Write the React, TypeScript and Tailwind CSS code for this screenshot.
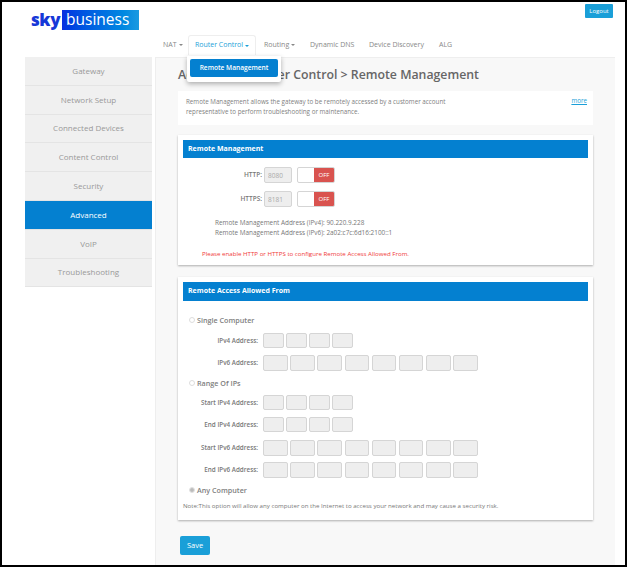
import React from "react";

const sideItems = ["Gateway", "Network Setup", "Connected Devices", "Content Control", "Security", "Advanced", "VoIP", "Troubleshooting"];

function Caret() {
  return <span className="ml-[2px] inline-block h-0 w-0 border-x-[2px] border-t-[2px] border-x-transparent border-t-current align-middle" />;
}

function Toggle() {
  return (
    <div className="ml-[5px] flex h-[16px] w-[38px] overflow-hidden rounded-[2px] border border-[#d5d5d5] bg-white">
      <div className="w-[16px]" />
      <div className="flex flex-1 items-center justify-center bg-[#d9534f] text-[6px] text-white">OFF</div>
    </div>
  );
}

function PortRow({ label, value }: { label: string; value: string }) {
  return (
    <div className="flex h-[16px] items-center">
      <div className="w-[79px] text-right text-[6.5px] font-semibold text-[#777]">{label}</div>
      <input
        readOnly
        value={value}
        className="ml-[2px] h-[16px] w-[28px] rounded-[2px] border border-[#d5d5d5] bg-[#eee] px-[3px] text-[6.5px] text-[#aaa] outline-none"
      />
      <Toggle />
    </div>
  );
}

function IpRow({ label, count, mt }: { label: string; count: number; mt: string }) {
  const boxes = Array.from({ length: count }, (_, i) => i);
  return (
    <div className={`flex items-center ${mt}`}>
      <div className="w-[75px] text-right text-[6.3px] font-semibold text-[#777]">{label}</div>
      <div className={`ml-[5px] flex ${count === 4 ? "gap-[2.6px]" : "gap-[2.7px]"}`}>
        {boxes.map((i) => (
          <div
            key={i}
            className={`rounded-[2px] border border-[#d5d5d5] bg-[#eee] ${count === 4 ? "h-[15px] w-[20.5px]" : "h-[16px] w-[24.5px]"}`}
          />
        ))}
      </div>
    </div>
  );
}

function RadioRow({ label, checked, mt }: { label: string; checked?: boolean; mt: string }) {
  return (
    <div className={`flex items-center ${mt}`}>
      <span className="ml-[6px] flex h-[6px] w-[6px] items-center justify-center rounded-full border border-[#ddd] bg-white">
        {checked && <span className="h-[4px] w-[4px] rounded-full bg-[#bbb]" />}
      </span>
      <span className="ml-[2px] text-[7.2px] font-semibold leading-[12px] text-[#808080]">{label}</span>
    </div>
  );
}

export default function App() {
  return (
    <div
      className="relative h-[567px] w-[627px] overflow-hidden border-2 border-black bg-white"
      style={{ fontFamily: '"Open Sans", sans-serif' }}
    >
      {/* header */}
      <div className="flex h-[33px] items-start justify-between">
        <div className="ml-[29px] mt-[8px] flex items-center">
          <span className="w-[31px] text-[17px] font-extrabold leading-[20px] tracking-tight text-[#1638d8]">sky</span>
          <span className="h-[20px] w-[77px] bg-gradient-to-r from-[#0b2ee0] to-[#1a9ae0] pl-[4px] text-[15.5px] leading-[18px] text-white">business</span>
        </div>
        <div className="mr-[12px] mt-[2px] flex h-[14px] w-[28px] items-center justify-center rounded-[1px] bg-[#1a9fd8] text-[6px] text-white">Logout</div>
      </div>

      {/* tabs */}
      <div className="ml-[161px] flex h-[20px] items-center text-[7px] text-[#888]">
        <span className="w-[25px]">NAT<Caret /></span>
        <span className="flex h-[20px] w-[68px] items-center justify-center rounded-t-[3px] border border-b-0 border-[#eee] text-[#1a9fd8]">
          Router Control<Caret />
        </span>
        <span className="ml-[8px] w-[46px]">Routing<Caret /></span>
        <span className="w-[59px]">Dynamic DNS</span>
        <span className="w-[70px]">Device Discovery</span>
        <span>ALG</span>
      </div>

      <div className="mt-[2px] flex items-start">
        {/* sidebar */}
        <div className="ml-[23px] w-[127px] bg-[#f0f0f0]">
          {sideItems.map((item) => (
            <div
              key={item}
              className={`flex h-[28.8px] items-center justify-center border-b border-[#e4e4e4] text-[8px] ${item === "Advanced" ? "bg-[#0480d0] text-white" : "text-[#999]"}`}
            >
              {item}
            </div>
          ))}
        </div>

        {/* main panel */}
        <div className="ml-[3px] h-[510px] w-[460px] border-l border-t border-[#eee] bg-[#f8f8f8] pl-[22px]">
          <h1 className="pt-[8px] text-[12.3px] font-semibold leading-[18px] text-[#666]">Advanced &gt; Router Control &gt; Remote Management</h1>

          <div className="mt-[7px] flex h-[34px] w-[415px] justify-between bg-white pl-[8px] pr-[6px] pt-[6px] text-[6.25px] leading-[10px] text-[#808080]">
            <p className="w-[280px]">Remote Management allows the gateway to be remotely accessed by a customer account representative to perform troubleshooting or maintenance.</p>
            <span className="-mt-[1px] text-[#1a9fd8] underline">more</span>
          </div>

          <div className="mt-[10px] h-[130px] w-[415px] bg-white px-[5px] pt-[5px] shadow-[0_1px_2px_rgba(0,0,0,0.3)]">
            <div className="flex h-[18px] items-center bg-[#0480d0] pl-[5px] text-[7px] font-bold text-white">Remote Management</div>
            <div className="mt-[9px] flex flex-col gap-[8px]">
              <PortRow label="HTTP:" value="8080" />
              <PortRow label="HTTPS:" value="8181" />
            </div>
            <div className="ml-[32px] mt-[11px] text-[6.4px] leading-[10px] text-[#777]">
              <div>Remote Management Address (IPv4): 90.220.9.228</div>
              <div>Remote Management Address (IPv6): 2a02:c7c:6d16:2100::1</div>
            </div>
            <div className="ml-[19px] mt-[11px] text-[6.15px] leading-[10px] text-[#f03a3a]">Please enable HTTP or HTTPS to configure Remote Access Allowed From.</div>
          </div>

          <div className="mt-[12px] h-[243px] w-[415px] bg-white px-[5px] pt-[5px] shadow-[0_1px_2px_rgba(0,0,0,0.3)]">
            <div className="flex h-[19px] items-center bg-[#0480d0] pl-[5px] text-[7px] font-bold text-white">Remote Access Allowed From</div>
            <RadioRow label="Single Computer" mt="mt-[13px]" />
            <IpRow label="IPv4 Address:" count={4} mt="mt-[7px]" />
            <IpRow label="IPv6 Address:" count={8} mt="mt-[7px]" />
            <RadioRow label="Range Of IPs" mt="mt-[6px]" />
            <IpRow label="Start IPv4 Address:" count={4} mt="mt-[6px]" />
            <IpRow label="End IPv4 Address:" count={4} mt="mt-[7px]" />
            <IpRow label="Start IPv6 Address:" count={8} mt="mt-[8px]" />
            <IpRow label="End IPv6 Address:" count={8} mt="mt-[6px]" />
            <RadioRow label="Any Computer" checked mt="mt-[6px]" />
            <div className="mt-[5px] whitespace-nowrap text-[6.15px] leading-[10px] text-[#777]">Note:This option will allow any computer on the Internet to access your network and may cause a security risk.</div>
          </div>

          <div className="ml-[2px] mt-[16px] flex h-[19px] w-[30px] items-center justify-center rounded-[2px] bg-[#1a9fd8] text-[7.5px] text-white">Save</div>
        </div>
      </div>

      {/* dropdown menu */}
      <div className="absolute left-[185px] top-[54px] z-10 h-[26px] w-[94px] rounded-b-[2px] bg-white p-[3px] shadow-[0_2px_5px_rgba(0,0,0,0.3)]">
        <div className="flex h-[18px] items-center justify-center rounded-[2px] bg-[#0480d0] text-[6.6px] font-semibold text-white">Remote Management</div>
      </div>
    </div>
  );
}
